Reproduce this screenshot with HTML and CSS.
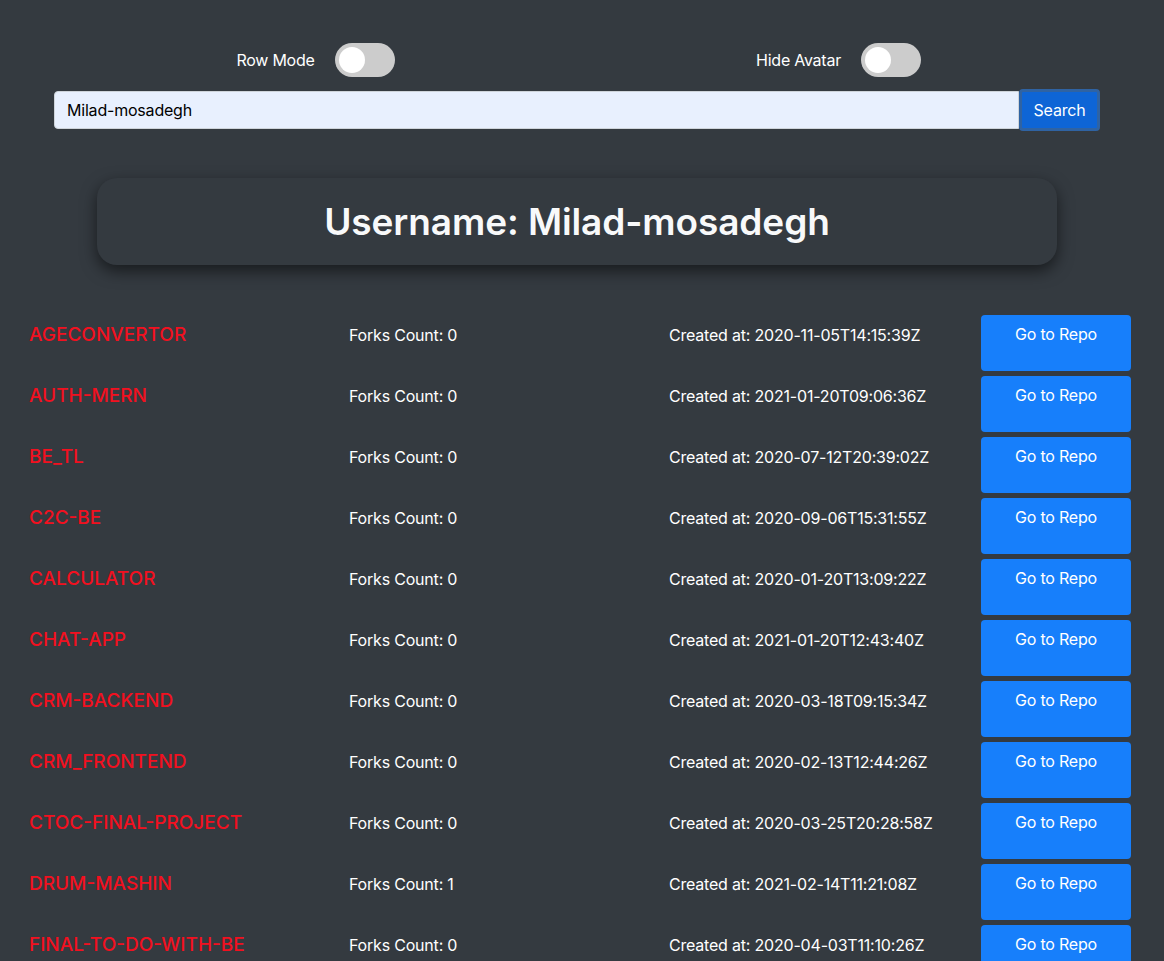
FILE: index.html
```html
<!DOCTYPE html>
<html>
<head>
<meta charset="utf-8">
<link rel="stylesheet" href="styles.css">
</head>
<body>
<div class="top">
  <div class="toggles">
    <div class="toggle-group">
      <span class="toggle-label">Row Mode</span>
      <span class="switch"><span class="knob"></span></span>
    </div>
    <div class="toggle-group">
      <span class="toggle-label">Hide Avatar</span>
      <span class="switch"><span class="knob"></span></span>
    </div>
  </div>
  <div class="search">
    <input class="search-input" type="text" value="Milad-mosadegh">
    <button class="search-btn">Search</button>
  </div>
  <div class="user-card">
    <h1 class="user-title">Username: Milad-mosadegh</h1>
  </div>
</div>
<div class="repos">
  <div class="repo"><span class="repo-name">AGECONVERTOR</span><span class="repo-info">Forks Count: 0</span><span class="repo-info">Created at: 2020-11-05T14:15:39Z</span><a class="repo-btn">Go to Repo</a></div>
  <div class="repo"><span class="repo-name">AUTH-MERN</span><span class="repo-info">Forks Count: 0</span><span class="repo-info">Created at: 2021-01-20T09:06:36Z</span><a class="repo-btn">Go to Repo</a></div>
  <div class="repo"><span class="repo-name">BE_TL</span><span class="repo-info">Forks Count: 0</span><span class="repo-info">Created at: 2020-07-12T20:39:02Z</span><a class="repo-btn">Go to Repo</a></div>
  <div class="repo"><span class="repo-name">C2C-BE</span><span class="repo-info">Forks Count: 0</span><span class="repo-info">Created at: 2020-09-06T15:31:55Z</span><a class="repo-btn">Go to Repo</a></div>
  <div class="repo"><span class="repo-name">CALCULATOR</span><span class="repo-info">Forks Count: 0</span><span class="repo-info">Created at: 2020-01-20T13:09:22Z</span><a class="repo-btn">Go to Repo</a></div>
  <div class="repo"><span class="repo-name">CHAT-APP</span><span class="repo-info">Forks Count: 0</span><span class="repo-info">Created at: 2021-01-20T12:43:40Z</span><a class="repo-btn">Go to Repo</a></div>
  <div class="repo"><span class="repo-name">CRM-BACKEND</span><span class="repo-info">Forks Count: 0</span><span class="repo-info">Created at: 2020-03-18T09:15:34Z</span><a class="repo-btn">Go to Repo</a></div>
  <div class="repo"><span class="repo-name">CRM_FRONTEND</span><span class="repo-info">Forks Count: 0</span><span class="repo-info">Created at: 2020-02-13T12:44:26Z</span><a class="repo-btn">Go to Repo</a></div>
  <div class="repo"><span class="repo-name">CTOC-FINAL-PROJECT</span><span class="repo-info">Forks Count: 0</span><span class="repo-info">Created at: 2020-03-25T20:28:58Z</span><a class="repo-btn">Go to Repo</a></div>
  <div class="repo"><span class="repo-name">DRUM-MASHIN</span><span class="repo-info">Forks Count: 1</span><span class="repo-info">Created at: 2021-02-14T11:21:08Z</span><a class="repo-btn">Go to Repo</a></div>
  <div class="repo"><span class="repo-name">FINAL-TO-DO-WITH-BE</span><span class="repo-info">Forks Count: 0</span><span class="repo-info">Created at: 2020-04-03T11:10:26Z</span><a class="repo-btn">Go to Repo</a></div>
</div>
</body>
</html>
```

FILE: styles.css
```css
html, body {
  margin: 0;
  padding: 0;
  background: #343a40;
  color: #ffffff;
  font-family: Inter, "Liberation Sans", sans-serif;
  font-size: 16px;
  overflow: hidden;
}

.top {
  margin-left: 54px;
  width: 1046px;
  padding-top: 43px;
}

.toggles {
  display: grid;
  grid-template-columns: 1fr 1fr;
}

.toggle-group {
  display: flex;
  align-items: center;
  justify-content: center;
  gap: 20px;
}

.toggle-label {
  font-size: 16px;
  letter-spacing: -0.25px;
  color: #ffffff;
}

.switch {
  display: block;
  width: 60px;
  height: 34px;
  border-radius: 17px;
  background: #cccccc;
  position: relative;
}

.knob {
  position: absolute;
  left: 4px;
  top: 4px;
  width: 26px;
  height: 26px;
  border-radius: 50%;
  background: #ffffff;
}

.search {
  display: flex;
  align-items: center;
  margin-top: 12px;
}

.search-input {
  flex: 1;
  height: 38px;
  box-sizing: border-box;
  border: 1px solid #ced4da;
  border-radius: 4px 0 0 4px;
  background: #e8f0fe;
  padding: 0 12px;
  font-family: inherit;
  font-size: 16px;
  letter-spacing: -0.2px;
  color: #000;
  outline: none;
}

.search-btn {
  width: 81px;
  height: 42px;
  box-sizing: border-box;
  border: 3px solid #2f63a3;
  border-radius: 4px;
  background: #0e65d6;
  color: #ffffff;
  font-family: inherit;
  font-size: 16px;
  letter-spacing: -0.2px;
  padding: 0;
}

.user-card {
  width: 960px;
  height: 87px;
  margin: 47px auto 0;
  background: #343a40;
  border-radius: 20px;
  box-shadow: 0 6px 16px rgba(0, 0, 0, 0.55);
  display: flex;
  align-items: center;
  justify-content: center;
}

.user-title {
  margin: 0;
  font-size: 37px;
  font-weight: 600;
  color: #f8f9fa;
  letter-spacing: -0.1px;
}

.repos {
  margin-top: 50px;
  padding-left: 29px;
  display: flex;
  flex-direction: column;
  gap: 5px;
}

.repo {
  display: grid;
  grid-template-columns: 320px 320px 312px 150px;
  align-items: start;
  height: 56px;
}

.repo-name {
  color: #f2101f;
  font-size: 19px;
  font-weight: 500;
  line-height: 24px;
  padding-top: 8px;
}

.repo-info {
  font-size: 16px;
  letter-spacing: -0.2px;
  line-height: 24px;
  padding-top: 8px;
}

.repo-btn {
  display: block;
  height: 56px;
  box-sizing: border-box;
  background: #177ffb;
  border-radius: 4px;
  text-align: center;
  padding-top: 7px;
  line-height: 24px;
  font-size: 16px;
  letter-spacing: -0.2px;
  color: #ffffff;
}
```
